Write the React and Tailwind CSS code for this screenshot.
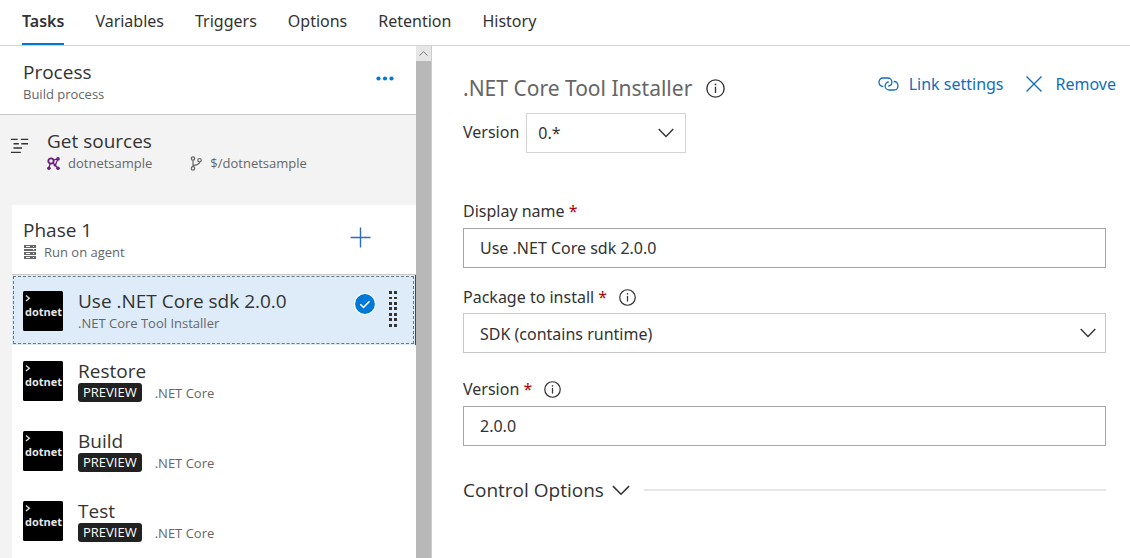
import React from "react";

const tabs = ["Tasks", "Variables", "Triggers", "Options", "Retention", "History"];

const tasks = [
  { title: "Use .NET Core sdk 2.0.0", type: ".NET Core Tool Installer", selected: true },
  { title: "Restore", type: ".NET Core", preview: true },
  { title: "Build", type: ".NET Core", preview: true },
  { title: "Test", type: ".NET Core", preview: true },
];

function InfoIcon({ className }) {
  return (
    <svg viewBox="0 0 18 18" className={className} fill="none" stroke="currentColor" aria-hidden="true">
      <circle cx="9" cy="9" r="8.2" strokeWidth="1.3" />
      <path d="M9 7.3v6" strokeWidth="1.3" />
      <path d="M9 4.4v1.5" strokeWidth="1.5" />
    </svg>
  );
}

function Chevron({ className }) {
  return (
    <svg viewBox="0 0 16 10" className={className} fill="none" stroke="currentColor" strokeWidth="1.4" aria-hidden="true">
      <path d="M0.7 1 8 8.4 15.3 1" />
    </svg>
  );
}

function LinkIcon() {
  return (
    <svg viewBox="0 0 21 14" className="h-[14px] w-[21px]" fill="none" stroke="currentColor" strokeWidth="1.3" aria-hidden="true">
      <path d="M5.3 9.5H4.900C2.700 9.500 1 7.700 1 5.300S2.700 1 4.900 1h4.700c2.400 0 4.300 1.800 4.300 4.100 0 2.200-1.600 3.900-3.700 3.900" />
      <path d="M15.700 4.500h.4c2.200 0 3.900 1.800 3.900 4.200S18.300 13 16.100 13h-4.700c-2.400 0-4.300-1.800-4.300-4.100 0-2.200 1.600-3.900 3.700-3.900" />
    </svg>
  );
}

function SourcesIcon() {
  return (
    <svg viewBox="0 0 18 17" className="h-[17px] w-[18px] text-[#333333]" fill="none" stroke="currentColor" strokeWidth="1.4" aria-hidden="true">
      <path d="M0 2.400h6.700M9.800 2.400h7.400M2.500 6.700h5.300M10.300 6.700h6.700M2.500 11h8.500M0 15.400h9.800" />
    </svg>
  );
}

function RepoIcon() {
  return (
    <svg viewBox="0 0 13 13" className="h-[13px] w-[13px] text-[#68217a]" fill="none" stroke="currentColor" aria-hidden="true">
      <circle cx="4" cy="4" r="2.700" strokeWidth="1.800" />
      <path d="M6 3.200 11 1.800M5.800 5.800 10.800 11M3.200 6.500 1.900 11M11 2 8.500 7.500" strokeWidth="1.200" />
      <g fill="currentColor" stroke="none">
        <circle cx="11" cy="1.900" r="1.800" />
        <circle cx="11" cy="11.200" r="1.800" />
        <circle cx="1.900" cy="11.200" r="1.800" />
        <circle cx="8" cy="8" r="1.500" />
      </g>
    </svg>
  );
}

function BranchIcon() {
  return (
    <svg viewBox="0 0 12 15" className="h-[15px] w-3" fill="none" stroke="currentColor" strokeWidth="1.200" aria-hidden="true">
      <circle cx="3" cy="2.500" r="1.700" />
      <circle cx="3" cy="12.400" r="1.700" />
      <circle cx="9.500" cy="4.200" r="1.700" />
      <path d="M3 4.200v6.500M9.500 6c0 3-3 3-6.500 3.400" />
    </svg>
  );
}

function ServerIcon() {
  return (
    <svg viewBox="0 0 13 14" className="h-[14px] w-[13px]" shapeRendering="crispEdges" aria-hidden="true">
      <path fill="currentColor" d="M1 0h12v3H1zM1 4h12v2H1zM1 7h12v3H1zM1 11h12v3H1z" />
      <path fill="#ffffff" d="M3 1h4v1H3zM10 1h1v1h-1zM10 4h1v1h-1zM3 8h4v1H3zM10 8h1v1h-1zM3 12h4v1H3zM10 12h1v1h-1z" />
    </svg>
  );
}

function DotnetTile() {
  return (
    <svg viewBox="0 0 40 40" className="h-10 w-10 shrink-0" aria-hidden="true">
      <rect width="40" height="40" rx="1.500" fill="#000000" />
      <path d="M3 4.500 6.300 7.200 3 10" fill="none" stroke="#dddddd" strokeWidth="1.400" />
      <text x="20.500" y="25" textAnchor="middle" className="font-['Open_Sans',sans-serif] text-[11px] font-bold" fill="#e6e6e6">
        dotnet
      </text>
    </svg>
  );
}

function SelectedMarks() {
  return (
    <div className="flex items-start gap-3 pr-[17px]">
      <svg viewBox="0 0 22 22" className="mt-[2px] h-[22px] w-[22px]" aria-label="Selected">
        <circle cx="11" cy="11" r="10.500" fill="#0078d7" stroke="#ffffff" strokeWidth="1.200" />
        <path d="M6.300 11.300 9.500 14.400 15.600 8.200" fill="none" stroke="#ffffff" strokeWidth="1.500" />
      </svg>
      <svg viewBox="0 0 10 37" className="h-[37px] w-[10px]" aria-hidden="true">
        <path
          fill="#333333"
          d="M1 0h3v3H1zM6 0h3v3H6zM1 6h3v2H1zM6 6h3v2H6zM1 11h3v3H1zM6 11h3v3H6zM1 16h3v3H1zM6 16h3v3H6zM1 22h3v3H1zM6 22h3v3H6zM1 27h3v3H1zM6 27h3v3H6zM1 33h3v3H1zM6 33h3v3H6z"
        />
      </svg>
    </div>
  );
}

function TaskRow({ task }) {
  return (
    <li className={task.selected ? "border-r border-[#005a9e] bg-[#deecf9]" : ""}>
      <button
        type="button"
        className={
          task.selected
            ? "flex h-[70px] w-full items-start pt-4 pl-[11px] text-left outline-1 -outline-offset-2 outline-dashed outline-[#6b7780]"
            : "flex h-[70px] w-full items-start pt-4 pl-[11px] text-left"
        }
      >
        <DotnetTile />
        <span className="-mt-[2px] flex flex-1 flex-col pl-[15px]">
          <span className="text-[19px] leading-6">{task.title}</span>
          <span className="flex h-5 items-start gap-[13px] text-[13px] leading-5 text-[#666666]">
            {task.preview && (
              <span className="rounded-[3px] bg-[#212121] px-[5px] leading-[19px] text-white">PREVIEW</span>
            )}
            {task.type}
          </span>
        </span>
        {task.selected && <SelectedMarks />}
      </button>
    </li>
  );
}

function FieldLabel({ htmlFor, children, info }) {
  return (
    <div className="flex h-6 items-center gap-3 text-[16px] leading-6">
      <label htmlFor={htmlFor}>
        {children} <span className="text-[#b00000]">*</span>
      </label>
      {info && <InfoIcon className="h-[17px] w-[17px]" />}
    </div>
  );
}

export default function App() {
  return (
    <div className="flex h-screen flex-col overflow-hidden bg-white font-['Open_Sans',sans-serif] text-[#333333]">
      <nav className="flex h-[46px] shrink-0 gap-[31px] border-b border-[#d4d4d4] pl-[22px] font-['Noto_Sans',sans-serif] text-[16px]">
        {tabs.map((tab, i) => (
          <a
            key={tab}
            href={"#" + tab.toLowerCase()}
            className={i === 0 ? "border-b-2 border-[#0078d7] pt-[9px] font-semibold leading-6" : "pt-[9px] leading-6"}
          >
            {tab}
          </a>
        ))}
      </nav>

      <div className="flex min-h-0 flex-1">
        <aside className="flex w-[432px] shrink-0 border-r border-[#cccccc]">
          <div className="flex min-w-0 flex-1 flex-col bg-[#f3f3f3]">
            <section className="flex h-[69px] shrink-0 items-start justify-between border-b border-[#c8c8c8] bg-white pt-[14px] pr-[22px] pl-[23px]">
              <div>
                <h2 className="text-[19px] leading-6">Process</h2>
                <p className="text-[13px] leading-5 text-[#666666]">Build process</p>
              </div>
              <button type="button" aria-label="More actions" className="py-4 text-[#0078d7]">
                <svg viewBox="0 0 18 5" className="h-[5px] w-[18px]" fill="currentColor" aria-hidden="true">
                  <circle cx="2.500" cy="2.500" r="2.100" />
                  <circle cx="9" cy="2.500" r="2.100" />
                  <circle cx="15.500" cy="2.500" r="2.100" />
                </svg>
              </button>
            </section>

            <section className="flex h-[90px] shrink-0 items-start gap-[18px] pt-[14px] pl-[11px]">
              <div className="pt-2">
                <SourcesIcon />
              </div>
              <div>
                <h2 className="text-[19px] leading-6">Get sources</h2>
                <div className="flex gap-[38px] text-[13px] leading-5 text-[#666666]">
                  <span className="flex items-center gap-2">
                    <RepoIcon />
                    dotnetsample
                  </span>
                  <span className="flex items-center gap-2">
                    <BranchIcon />
                    $/dotnetsample
                  </span>
                </div>
              </div>
            </section>

            <section className="ml-3 flex-1 bg-white">
              <header className="flex h-[70px] items-start justify-between border-b border-[#c8c8c8] pt-[13px] pr-[45px] pl-[11px]">
                <div>
                  <h2 className="text-[19px] leading-6">Phase 1</h2>
                  <p className="flex items-center gap-2 text-[13px] leading-5 text-[#666666]">
                    <ServerIcon />
                    Run on agent
                  </p>
                </div>
                <button type="button" aria-label="Add task" className="py-[9px] text-[#2b6cc4]">
                  <svg viewBox="0 0 21 21" className="h-[21px] w-[21px]" fill="none" stroke="currentColor" strokeWidth="1.400" aria-hidden="true">
                    <path d="M10.500 0.500v20M0.500 10.500h20" />
                  </svg>
                </button>
              </header>
              <ul>
                {tasks.map((task) => (
                  <TaskRow key={task.title} task={task} />
                ))}
              </ul>
            </section>
          </div>

          <div className="w-[15px] shrink-0 bg-[#b8b8b8]">
            <div className="flex h-[15px] items-center justify-center bg-[#e6e6e6] text-[#777777]">
              <svg viewBox="0 0 9 5" className="h-[5px] w-[9px]" fill="none" stroke="currentColor" aria-hidden="true">
                <path d="M0.500 4.500 4.500 0.700 8.500 4.500" />
              </svg>
            </div>
          </div>
        </aside>

        <main className="min-w-0 flex-1 pt-[26px] pr-6 pl-[31px] font-['Noto_Sans',sans-serif]">
          <div className="-mr-[10px] flex items-start justify-between">
            <h1 className="flex items-center gap-[14px] text-[21px] leading-8 text-[#666666]">
              .NET Core Tool Installer
              <InfoIcon className="h-[19px] w-[19px] text-[#333333]" />
            </h1>
            <div className="flex gap-[22px] text-[16px] leading-6 text-[#106ebe]">
              <button type="button" className="flex items-center gap-[10px]">
                <LinkIcon />
                Link settings
              </button>
              <button type="button" className="flex items-center gap-[14px]">
                <svg viewBox="0 0 16 16" className="h-4 w-4" fill="none" stroke="currentColor" strokeWidth="1.400" aria-hidden="true">
                  <path d="M0.500 0.500 15.500 15.500M15.500 0.500 0.500 15.500" />
                </svg>
                Remove
              </button>
            </div>
          </div>

          <div className="mt-[9px] flex items-start gap-[7px] text-[16px]">
            <label htmlFor="task-version" className="pt-[7px] leading-6">
              Version
            </label>
            <div className="relative w-40">
              <select id="task-version" className="h-10 w-full appearance-none border border-[#d4d4d4] bg-white pl-[11px]">
                <option>0.*</option>
              </select>
              <Chevron className="pointer-events-none absolute top-[15px] right-3 h-[10px] w-4" />
            </div>
          </div>

          <form className="mt-[46px] text-[16px]">
            <FieldLabel htmlFor="display-name">Display name</FieldLabel>
            <input
              id="display-name"
              type="text"
              defaultValue="Use .NET Core sdk 2.0.0"
              className="mt-[5px] mb-[17px] block h-10 w-full border border-[#a6a6a6] px-4"
            />
            <FieldLabel htmlFor="package" info>
              Package to install
            </FieldLabel>
            <div className="relative mt-1 mb-6">
              <select id="package" className="block h-10 w-full appearance-none border border-[#c8c8c8] bg-white px-4 pt-[2px]">
                <option>SDK (contains runtime)</option>
              </select>
              <Chevron className="pointer-events-none absolute top-[15px] right-[10px] h-[10px] w-4" />
            </div>
            <FieldLabel htmlFor="sdk-version" info>
              Version
            </FieldLabel>
            <input
              id="sdk-version"
              type="text"
              defaultValue="2.0.0"
              className="mt-[5px] mb-8 block h-10 w-full border border-[#a6a6a6] px-4"
            />
            <div className="flex items-center gap-[14px]">
              <button type="button" className="flex items-center gap-2 font-['Open_Sans',sans-serif] text-[19px] leading-6">
                Control Options
                <Chevron className="h-[11px] w-[18px]" />
              </button>
              <hr className="flex-1 border-t-2 border-[#e6e6e6]" />
            </div>
          </form>
        </main>
      </div>
    </div>
  );
}
